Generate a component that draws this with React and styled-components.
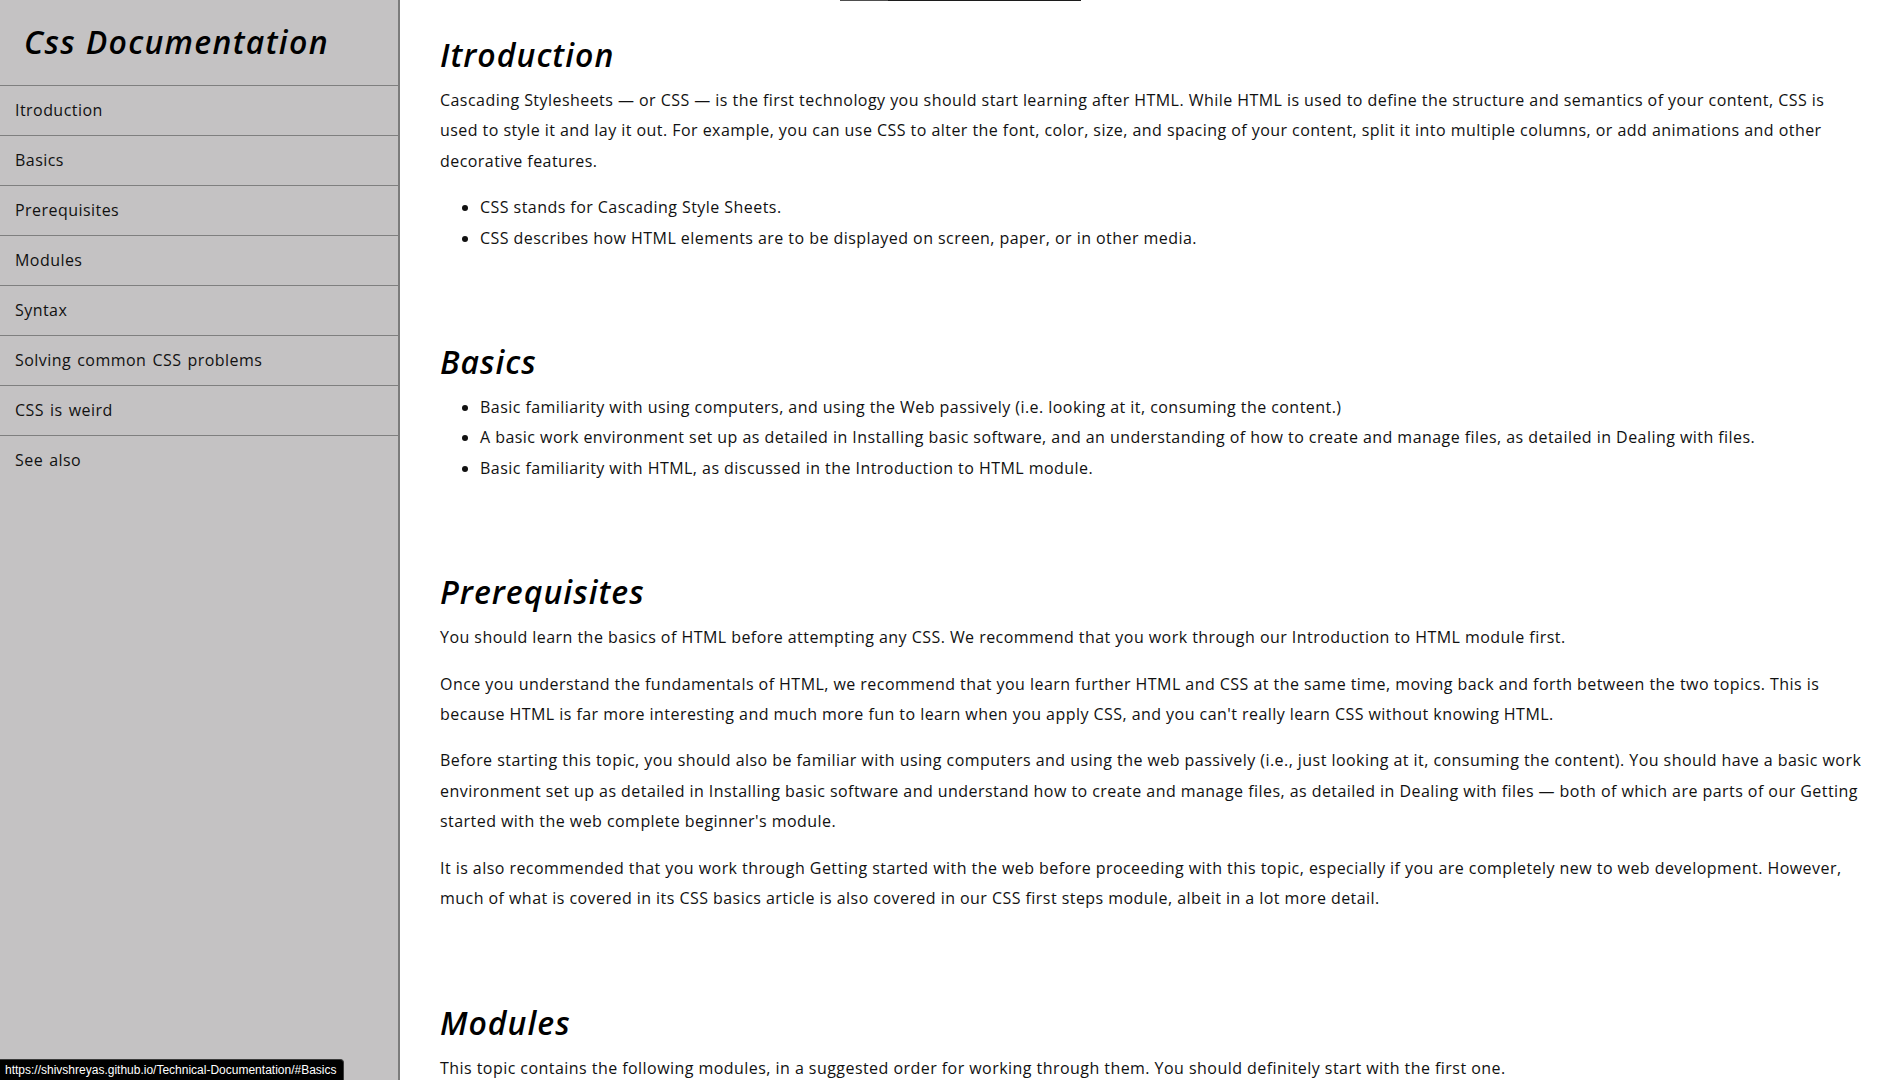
import React from "react";
import styled, { createGlobalStyle } from "styled-components";

const GlobalStyle = createGlobalStyle`
  html, body {
    margin: 0;
    padding: 0;
    height: 100%;
    overflow: hidden;
    background: #ffffff;
  }
  #root { height: 100%; }
  *::-webkit-scrollbar { display: none; }
`;

const Page = styled.div`
  display: grid;
  grid-template-columns: 400px 1fr;
  height: 100vh;
  overflow: hidden;
  font-family: "Open Sans", "Noto Sans", sans-serif;
  color: #111;
`;

const Sidebar = styled.nav`
  box-sizing: border-box;
  height: 100%;
  background: #c4c2c3;
  border-right: 2px solid #7c7c7c;
  display: flex;
  flex-direction: column;
`;

const SideTitle = styled.header`
  box-sizing: border-box;
  height: 86px;
  padding: 22px 0 0 24px;
  border-bottom: 1px solid #7f7f7f;
  font-size: 32px;
  line-height: 40px;
  font-style: italic;
  font-weight: 600;
  letter-spacing: 1.3px;
  color: #000;
  margin: 0;
`;

const NavList = styled.ul`
  list-style: none;
  margin: 0;
  padding: 0;
`;

const NavItem = styled.li`
  border-bottom: ${(p) => (p.$last ? "none" : "1px solid #7f7f7f")};
`;

const NavLink = styled.a`
  display: block;
  height: 49px;
  line-height: 49px;
  padding-left: 15px;
  font-size: 16px;
  letter-spacing: 0.45px;
  word-spacing: 1.5px;
  color: #111;
  text-decoration: none;
`;

const Main = styled.main`
  overflow: hidden;
  padding: 0 40px;
  background: #fff;
`;

const TopRule = styled.div`
  width: 241px;
  height: 1px;
  margin-left: 400px;
  background: linear-gradient(to right, #4e4e4e 0 48px, #1c1c1c 48px);
`;

const Doc = styled.div`
  padding-top: 32px;
`;

const Section = styled.section`
  padding-bottom: 71px;
`;

const Heading = styled.h2`
  margin: 2px 0 10px;
  font-size: 32px;
  line-height: 40px;
  font-style: italic;
  font-weight: 600;
  letter-spacing: 1px;
  color: #000;
`;

const Para = styled.p`
  margin: 0 0 16px;
  font-size: 16px;
  line-height: 30.4px;
  letter-spacing: 0.45px;
`;

const List = styled.ul`
  margin: 0 0 16px;
  padding-left: 40px;
  font-size: 16px;
  line-height: 30.4px;
  letter-spacing: 0.45px;
`;

const Status = styled.div`
  position: fixed;
  left: 0;
  bottom: 0;
  height: 21px;
  padding: 0 6px 0 5px;
  display: flex;
  align-items: center;
  background: #000;
  color: #fff;
  font-family: "Liberation Sans", Arial, sans-serif;
  font-size: 12px;
  border-top-right-radius: 4px;
  border-top: 1px solid #3a3a3a;
  border-right: 1px solid #3a3a3a;
  box-sizing: border-box;
`;

const navItems = [
  "Itroduction",
  "Basics",
  "Prerequisites",
  "Modules",
  "Syntax",
  "Solving common CSS problems",
  "CSS is weird",
  "See also",
];

const L = ({ lines }) =>
  lines.map((l, i) => (
    <React.Fragment key={i}>
      {l}
      {i < lines.length - 1 && <br />}
    </React.Fragment>
  ));

export default function App() {
  return (
    <>
      <GlobalStyle />
      <Page>
        <Sidebar>
          <SideTitle>Css Documentation</SideTitle>
          <NavList>
            {navItems.map((n, i) => (
              <NavItem key={n} $last={i === navItems.length - 1}>
                <NavLink href={"#" + n.replace(/ /g, "_")}>{n}</NavLink>
              </NavItem>
            ))}
          </NavList>
        </Sidebar>
        <Main>
          <TopRule />
          <Doc>
            <Section id="Itroduction">
              <Heading>Itroduction</Heading>
              <Para>
                <L
                  lines={[
                    "Cascading Stylesheets — or CSS — is the first technology you should start learning after HTML. While HTML is used to define the structure and semantics of your content, CSS is",
                    "used to style it and lay it out. For example, you can use CSS to alter the font, color, size, and spacing of your content, split it into multiple columns, or add animations and other",
                    "decorative features.",
                  ]}
                />
              </Para>
              <List>
                <li>CSS stands for Cascading Style Sheets.</li>
                <li>CSS describes how HTML elements are to be displayed on screen, paper, or in other media.</li>
              </List>
            </Section>

            <Section id="Basics">
              <Heading>Basics</Heading>
              <List>
                <li>Basic familiarity with using computers, and using the Web passively (i.e. looking at it, consuming the content.)</li>
                <li>A basic work environment set up as detailed in Installing basic software, and an understanding of how to create and manage files, as detailed in Dealing with files.</li>
                <li>Basic familiarity with HTML, as discussed in the Introduction to HTML module.</li>
              </List>
            </Section>

            <Section id="Prerequisites">
              <Heading>Prerequisites</Heading>
              <Para>
                You should learn the basics of HTML before attempting any CSS. We recommend that you work through our Introduction to HTML module first.
              </Para>
              <Para>
                <L
                  lines={[
                    "Once you understand the fundamentals of HTML, we recommend that you learn further HTML and CSS at the same time, moving back and forth between the two topics. This is",
                    "because HTML is far more interesting and much more fun to learn when you apply CSS, and you can't really learn CSS without knowing HTML.",
                  ]}
                />
              </Para>
              <Para>
                <L
                  lines={[
                    "Before starting this topic, you should also be familiar with using computers and using the web passively (i.e., just looking at it, consuming the content). You should have a basic work",
                    "environment set up as detailed in Installing basic software and understand how to create and manage files, as detailed in Dealing with files — both of which are parts of our Getting",
                    "started with the web complete beginner's module.",
                  ]}
                />
              </Para>
              <Para>
                <L
                  lines={[
                    "It is also recommended that you work through Getting started with the web before proceeding with this topic, especially if you are completely new to web development. However,",
                    "much of what is covered in its CSS basics article is also covered in our CSS first steps module, albeit in a lot more detail.",
                  ]}
                />
              </Para>
            </Section>

            <Section id="Modules">
              <Heading>Modules</Heading>
              <Para>
                This topic contains the following modules, in a suggested order for working through them. You should definitely start with the first one.
              </Para>
              <List>
                <li>CSS first steps</li>
                <li>CSS building blocks</li>
                <li>CSS styling text</li>
                <li>CSS layout</li>
              </List>
            </Section>

            <Section id="Syntax">
              <Heading>Syntax</Heading>
              <Para>A CSS rule-set consists of a selector and a declaration block.</Para>
            </Section>

            <Section id="Solving_common_CSS_problems">
              <Heading>Solving common CSS problems</Heading>
              <Para>Use CSS to solve common problems provides links to sections of content explaining how to use CSS to solve very common problems when creating a web page.</Para>
            </Section>

            <Section id="CSS_is_weird">
              <Heading>CSS is weird</Heading>
              <Para>CSS has a cascade, and elements can inherit values from their parents.</Para>
            </Section>

            <Section id="See_also">
              <Heading>See also</Heading>
              <Para>CSS on MDN Web Docs.</Para>
            </Section>
          </Doc>
        </Main>
      </Page>
      <Status>https://shivshreyas.github.io/Technical-Documentation/#Basics</Status>
    </>
  );
}
